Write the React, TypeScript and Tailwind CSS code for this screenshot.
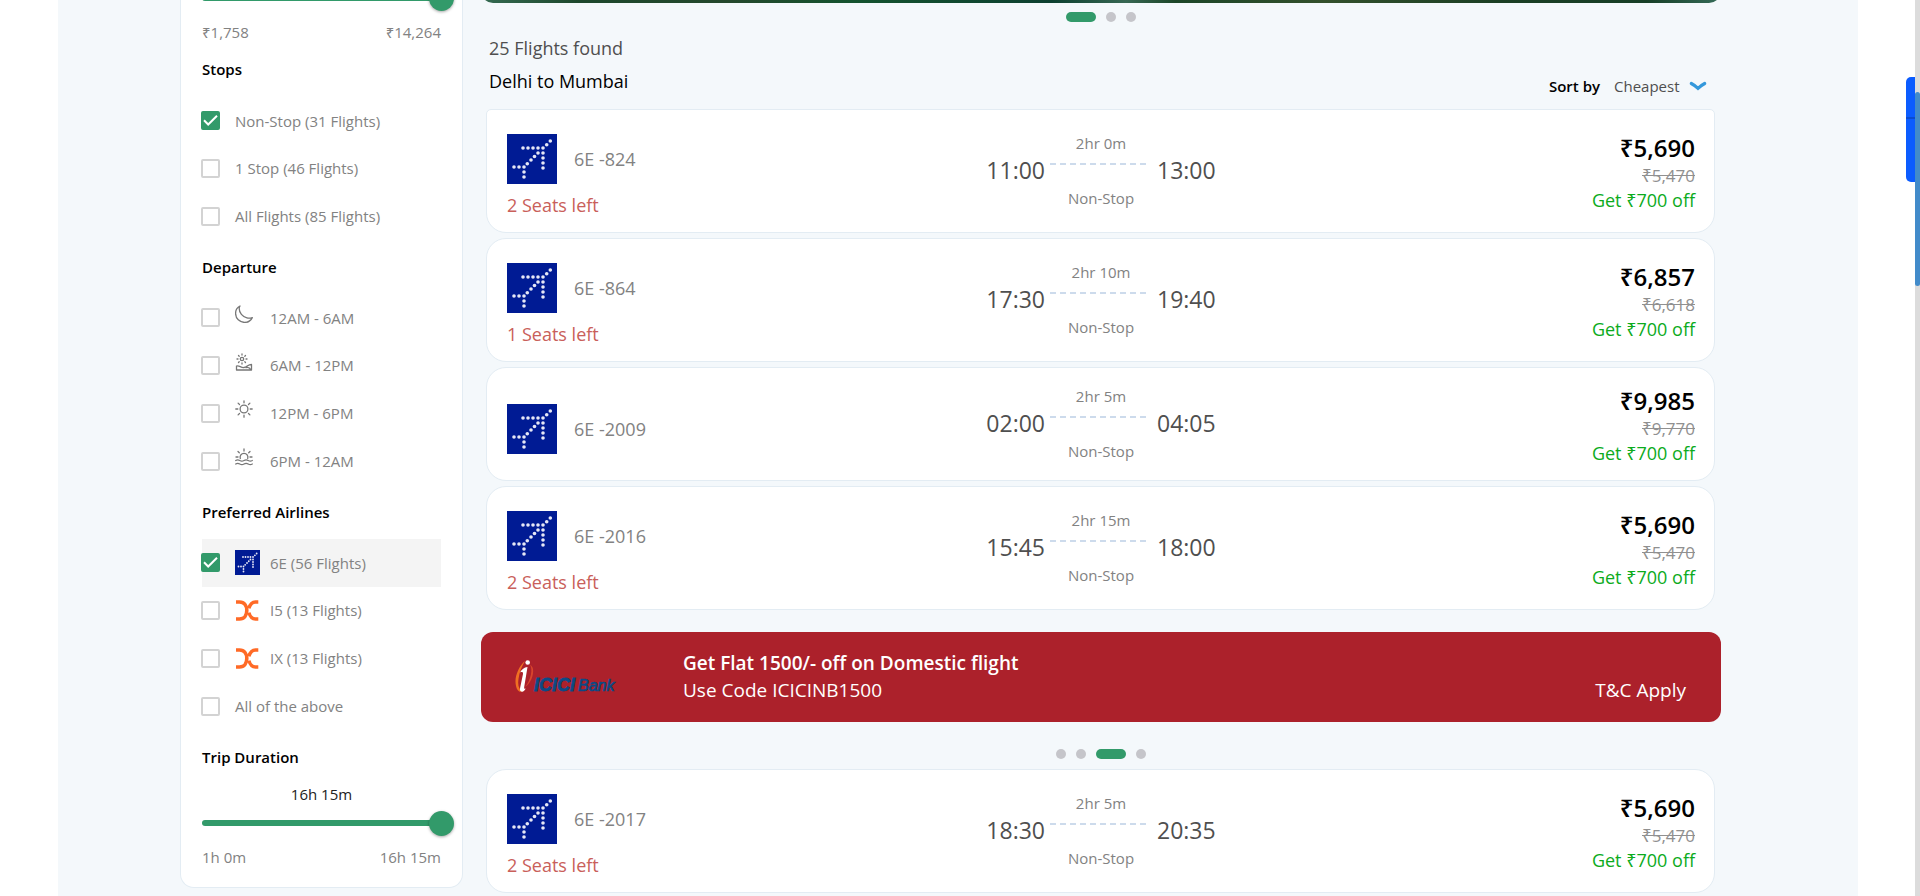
import React from "react";

type Flight = {
  code: string;
  depart: string;
  arrive: string;
  duration: string;
  seats?: number;
  price: string;
  oldPrice: string;
};

const flights: Flight[] = [
  { code: "6E -824", depart: "11:00", arrive: "13:00", duration: "2hr 0m", seats: 2, price: "₹5,690", oldPrice: "₹5,470" },
  { code: "6E -864", depart: "17:30", arrive: "19:40", duration: "2hr 10m", seats: 1, price: "₹6,857", oldPrice: "₹6,618" },
  { code: "6E -2009", depart: "02:00", arrive: "04:05", duration: "2hr 5m", price: "₹9,985", oldPrice: "₹9,770" },
  { code: "6E -2016", depart: "15:45", arrive: "18:00", duration: "2hr 15m", seats: 2, price: "₹5,690", oldPrice: "₹5,470" },
];

const lastFlight: Flight = {
  code: "6E -2017", depart: "18:30", arrive: "20:35", duration: "2hr 5m", seats: 2, price: "₹5,690", oldPrice: "₹5,470",
};

const logoDots: [number, number][] = [
  [43.3, 7], [39.7, 10.7], [16, 14], [21, 14], [26, 14], [31, 14], [36, 14],
  [31, 19], [36, 19], [27.5, 22.5], [24, 26], [20.3, 29.7], [36, 24], [36, 29], [36, 34],
  [17, 33], [12, 33], [7, 33], [17, 38], [17, 43],
];

function IndigoLogo({ className }: { className: string }) {
  return (
    <svg viewBox="0 0 50 50" className={className} aria-hidden="true">
      <rect width="50" height="50" fill="#001b94" />
      {logoDots.map(([x, y]) => (
        <circle key={`${x}-${y}`} cx={x} cy={y} r="1.800" fill="#e6e8f6" />
      ))}
    </svg>
  );
}

function ExpressLogo() {
  return (
    <svg viewBox="0 0 25 25" className="size-[25px]" fill="none" stroke="#ff6a26" aria-hidden="true">
      <path d="M1 4H4.5C9.5 4 11.8 8 11.8 12.5S9.5 21 4.5 21H1" strokeWidth="3.6" />
      <path d="M23.3 4H20.5C16.6 4 14.8 7.2 13.9 10.4M13.9 14.6C14.8 17.8 16.6 21 20.5 21H23.3" strokeWidth="3.4" />
    </svg>
  );
}

function TimeIcon({ kind }: { kind: string }) {
  return (
    <svg viewBox="0 0 18 18" className="mb-2 size-[18px]" fill="none" stroke="#777" strokeWidth="1.3" strokeLinecap="round" strokeLinejoin="round" aria-hidden="true">
      {kind === "moon" && (
        <path d="M5 1C2.2 2.4.5 5.200.6 8.500.7 13.500 4.600 17.400 9.600 17.400 13 17.400 15.900 15.500 17.300 12.600 15.700 13.200 13.700 13.400 11.900 12.900 7.500 11.800 4.200 7.700 4.200 3.600 4.200 2.700 4.500 1.800 5 1Z" />
      )}
      {kind === "morning" && (
        <>
          <circle cx="7" cy="6" r="1.7" />
          <path d="M7 1v1M7 10v1M2 6h1M11 6h1M3.500 2.500l.7.7M9.800 8.800l.7.7M3.500 9.500l.7-.7M9.800 3.200l.7-.7" />
          <path d="M1.500 13C4 11.800 6 15 9 14.500S13 11.500 16.500 11.500V17H1.500ZM11 14.500C13 14 15 15 16 17" />
        </>
      )}
      {kind === "sun" && (
        <>
          <circle cx="9" cy="9" r="3.900" />
          <path d="M9 .8v2M9 15.200v2M.8 9h2M15.200 9h2M3.100 3.100l1.400 1.400M13.500 13.500l1.400 1.400M3.100 14.900l1.400-1.400M13.500 4.500l1.400-1.400" />
        </>
      )}
      {kind === "evening" && (
        <>
          <path d="M5.300 10.500A3.900 3.900 0 1 1 12.700 10.500M9 1v2M3 3.500l1.300 1.300M15 3.500l-1.300 1.300M1 9h2M15 9h2" />
          <path d="M.7 12.500q2-1.200 4.100 0t4.200 0 4.200 0 4.100 0M.7 16q2-1.200 4.100 0t4.200 0 4.200 0 4.100 0" />
        </>
      )}
    </svg>
  );
}

function FilterRow({ label, icon, checked = false, highlighted = false }: {
  label: string;
  icon?: React.ReactNode;
  checked?: boolean;
  highlighted?: boolean;
}) {
  return (
    <label className={`flex items-center text-[15px] text-[#828282] ${highlighted ? "bg-[#f4f4f4]" : ""}`}>
      <span className="relative -ml-px mr-[15px] grid size-[19px] shrink-0">
        <input
          type="checkbox"
          defaultChecked={checked}
          className="peer size-[19px] appearance-none rounded-[2px] border-2 border-[#d3d3d3] bg-white checked:border-[#329a6a] checked:bg-[#329a6a]"
        />
        <svg viewBox="0 0 19 19" className="pointer-events-none absolute inset-0 hidden peer-checked:block" fill="none" stroke="#fff" strokeWidth="2" aria-hidden="true">
          <path d="M3 9.300 7.200 13.500 16 4.800" />
        </svg>
      </span>
      {icon && <span className="mr-[10px] flex w-[25px] shrink-0">{icon}</span>}
      {label}
    </label>
  );
}

function RangeSlider({ label }: { label: string }) {
  return (
    <div className="-mr-[13px] flex h-6 items-center">
      <input
        type="range"
        aria-label={label}
        min={0}
        max={100}
        defaultValue={100}
        className="h-[6px] w-full appearance-none rounded-full bg-[linear-gradient(to_right,#329a6a_95%,transparent_95%)] [&::-webkit-slider-thumb]:size-[25px] [&::-webkit-slider-thumb]:appearance-none [&::-webkit-slider-thumb]:rounded-full [&::-webkit-slider-thumb]:bg-[#329a6a] [&::-webkit-slider-thumb]:shadow-[0_1px_3px_rgba(0,0,0,0.35)]"
      />
    </div>
  );
}

function FilterHeading({ children }: { children: React.ReactNode }) {
  return <h3 className="text-[15px] leading-6 font-semibold text-black">{children}</h3>;
}

function Filters() {
  return (
    <aside className="h-fit w-[283px] shrink-0 rounded-b-[14px] border border-t-0 border-[#e3ecf3] bg-white px-[21px] pb-[18px]">
      <div className="-mt-[14px]">
        <RangeSlider label="Price" />
      </div>
      <div className="mt-[10px] flex justify-between text-[15px] leading-6 text-[#828282]">
        <span>₹1,758</span>
        <span>₹14,264</span>
      </div>
      <div className="mt-[13px]">
        <FilterHeading>Stops</FilterHeading>
      </div>
      <div className="mt-4 grid h-[143px] grid-rows-3">
        <FilterRow label="Non-Stop (31 Flights)" checked />
        <FilterRow label="1 Stop (46 Flights)" />
        <FilterRow label="All Flights (85 Flights)" />
      </div>
      <div className="mt-[15px]">
        <FilterHeading>Departure</FilterHeading>
      </div>
      <div className="mt-[15px] grid h-[191px] grid-rows-4">
        <FilterRow label="12AM - 6AM" icon={<TimeIcon kind="moon" />} />
        <FilterRow label="6AM - 12PM" icon={<TimeIcon kind="morning" />} />
        <FilterRow label="12PM - 6PM" icon={<TimeIcon kind="sun" />} />
        <FilterRow label="6PM - 12AM" icon={<TimeIcon kind="evening" />} />
      </div>
      <div className="mt-[15px]">
        <FilterHeading>Preferred Airlines</FilterHeading>
      </div>
      <div className="mt-[15px] grid h-[191px] grid-rows-4">
        <FilterRow label="6E (56 Flights)" icon={<IndigoLogo className="size-[25px]" />} checked highlighted />
        <FilterRow label="I5 (13 Flights)" icon={<ExpressLogo />} />
        <FilterRow label="IX (13 Flights)" icon={<ExpressLogo />} />
        <FilterRow label="All of the above" />
      </div>
      <div className="mt-[15px]">
        <FilterHeading>Trip Duration</FilterHeading>
      </div>
      <p className="mt-[13px] text-center text-[15px] leading-6 text-[#222]">16h 15m</p>
      <div className="mt-[5px]">
        <RangeSlider label="Trip Duration" />
      </div>
      <div className="mt-[10px] flex justify-between text-[15px] leading-6 text-[#828282]">
        <span>1h 0m</span>
        <span>16h 15m</span>
      </div>
    </aside>
  );
}

function FlightCard({ flight, first = false }: { flight: Flight; first?: boolean }) {
  return (
    <article
      className={`grid grid-cols-[1fr_auto_1fr] items-center rounded-[20px] border border-[#e3ecf3] bg-white py-[15px] pr-[19px] pl-5 ${first ? "rounded-t-[5px]" : ""}`}
    >
      <div className="pt-[9px]">
        <div className="flex items-center gap-[17px]">
          <IndigoLogo className="size-[50px]" />
          <span className="text-lg text-[#828282]">{flight.code}</span>
        </div>
        {flight.seats && <p className="mt-[10px] pb-px text-lg leading-[22px] font-medium text-[#c9605a]">{flight.seats} Seats left</p>}
      </div>
      <div className="flex items-center">
        <span className="pb-[2px] text-[23px] text-[#4f4f4f]">{flight.depart}</span>
        <div className="w-28 pb-[2px] text-center text-[15px] leading-6 text-[#828282]">
          <p>{flight.duration}</p>
          <svg viewBox="0 0 96 2" className="mt-2 mb-[21px] ml-[5px] h-[2px] w-24" aria-hidden="true">
            <path d="M0 1H96" stroke="#cddbec" strokeWidth="2" strokeDasharray="6 4" />
          </svg>
          <p>Non-Stop</p>
        </div>
        <span className="pb-[2px] text-[23px] text-[#4f4f4f]">{flight.arrive}</span>
      </div>
      <div className="pt-[2px] text-right leading-6">
        <p className="text-2xl leading-8 font-semibold text-black">{flight.price}</p>
        <p className="text-[17px] leading-6 text-[#909090] line-through">{flight.oldPrice}</p>
        <p className="text-lg leading-6 text-[#0cab1c]">Get ₹700 off</p>
      </div>
    </article>
  );
}

function CarouselDots({ count, active }: { count: number; active: number }) {
  return (
    <div className="flex justify-center gap-[10px]">
      {Array.from({ length: count }, (_, i) => (
        <button
          key={i}
          type="button"
          aria-label={`Slide ${i + 1}`}
          className={i === active ? "h-[10px] w-[30px] rounded-full bg-[#329a6a]" : "size-[10px] rounded-full bg-[#c5c5ca]"}
        />
      ))}
    </div>
  );
}

function IciciLogo() {
  return (
    <svg viewBox="0 0 102 36" className="h-9 w-[102px]" role="img" aria-label="ICICI Bank">
      <path d="M10 2C3 8-1 19 1 27 2 32 5 34 8 32 4 31 2.500 27 3.500 20 4.300 13 7 7 10 2Z" fill="#f07022" />
      <path d="M15 6C18 10 16 21 10 28 15 25 19 17 18 10 17.600 8 16.500 6.500 15 6Z" fill="#d8452c" />
      <circle cx="12.700" cy="3.500" r="2.300" fill="#fff" />
      <path d="M5 13.500C7 10 9 8.500 12.500 8L9.200 28C9 30 9.800 30.500 11 29 9.500 32.500 7 33.500 5.500 32 4.700 31 5 29.500 5.300 28L8 15C8.200 13 7 12.500 5 13.500Z" fill="#fff" />
      <text x="19" y="32" fontFamily="Liberation Sans, Arial, sans-serif" fontSize="18" fontWeight="700" fontStyle="italic" fill="#0b4a85" stroke="#0b4a85" strokeWidth="0.8">ICICI</text>
      <text x="63" y="32" fontFamily="Liberation Sans, Arial, sans-serif" fontSize="16" fontStyle="italic" fill="#0b4a85" stroke="#0b4a85" strokeWidth="0.7">Bank</text>
    </svg>
  );
}

export default function App() {
  return (
    <div className="relative min-h-screen overflow-hidden bg-white pr-[4px] font-['Open_Sans','Noto_Sans',sans-serif]">
      <div className="mx-auto flex min-h-screen max-w-[1800px] gap-[18px] bg-[#f4f8fb] pr-[137px] pl-[122px]">
        <Filters />
        <main className="min-w-0 flex-1">
          <div className="-mt-[17px] h-5 rounded-b-[12px] bg-[linear-gradient(to_right,#356b52_0%,#1d472c_8%,#24482c_20%,#14532f_30%,#0d4030_46%,#376753_52%,#1c4628_56%,#33502c_68%,#1b3f24_82%,#173f27_94%,#356b58_100%)]" />
          <div className="mt-[9px]">
            <CarouselDots count={3} active={0} />
          </div>
          <header className="mt-[14px] flex items-end justify-between px-2">
            <div className="pb-[5px] text-lg leading-6">
              <p className="text-[#4f4f4f]">25 Flights found</p>
              <h2 className="mt-[9px] font-medium text-black">Delhi to Mumbai</h2>
            </div>
            <div className="flex items-center pr-[6px] text-[15px] leading-6">
              <label htmlFor="sort" className="mr-[14px] font-semibold text-black">Sort by</label>
              <select id="sort" className="appearance-none bg-transparent text-[#4f4f4f]" defaultValue="Cheapest">
                <option>Cheapest</option>
              </select>
              <svg viewBox="0 0 18 10" className="ml-[9px] h-[10px] w-[18px]" fill="none" stroke="#3498db" strokeWidth="3.200" strokeLinecap="round" aria-hidden="true">
                <path d="M2.300 2.500Q6 4.500 9 7.300 12 4.500 15.700 2.500" />
              </svg>
            </div>
          </header>
          <section className="mt-[11px] grid gap-[5px] pr-[6px] pl-[5px]">
            {flights.map((flight, i) => (
              <FlightCard key={flight.code} flight={flight} first={i === 0} />
            ))}
          </section>
          <section className="mt-[22px] flex items-center rounded-[12px] bg-[#ac212b] py-[18px] pr-[35px] pl-[34px] text-[19px] leading-[27px] text-white">
            <IciciLogo />
            <div className="ml-[66px] flex-1">
              <h3 className="font-semibold">Get Flat 1500/- off on Domestic flight</h3>
              <p className="font-medium">Use Code ICICINB1500</p>
            </div>
            <a href="#terms" className="self-end font-medium">T&amp;C Apply</a>
          </section>
          <div className="mt-[27px]">
            <CarouselDots count={4} active={2} />
          </div>
          <section className="mt-[10px] pr-[6px] pl-[5px]">
            <FlightCard flight={lastFlight} />
          </section>
        </main>
      </div>

      {/* Floating feedback tab and page scroll indicator */}
      <div className="absolute top-[77px] right-[5px] w-[9px] overflow-hidden rounded-l-[5px] bg-[#0b5cff]">
        <div className="h-[42px] border-b-2 border-[#0a4bd0]" />
        <div className="h-[63px]" />
      </div>
      <div className="absolute inset-y-0 right-0 w-[5px] bg-[#dcdcdc] pt-[92px]">
        <div className="h-[194px] rounded-full bg-[#428bca]" />
      </div>
    </div>
  );
}
